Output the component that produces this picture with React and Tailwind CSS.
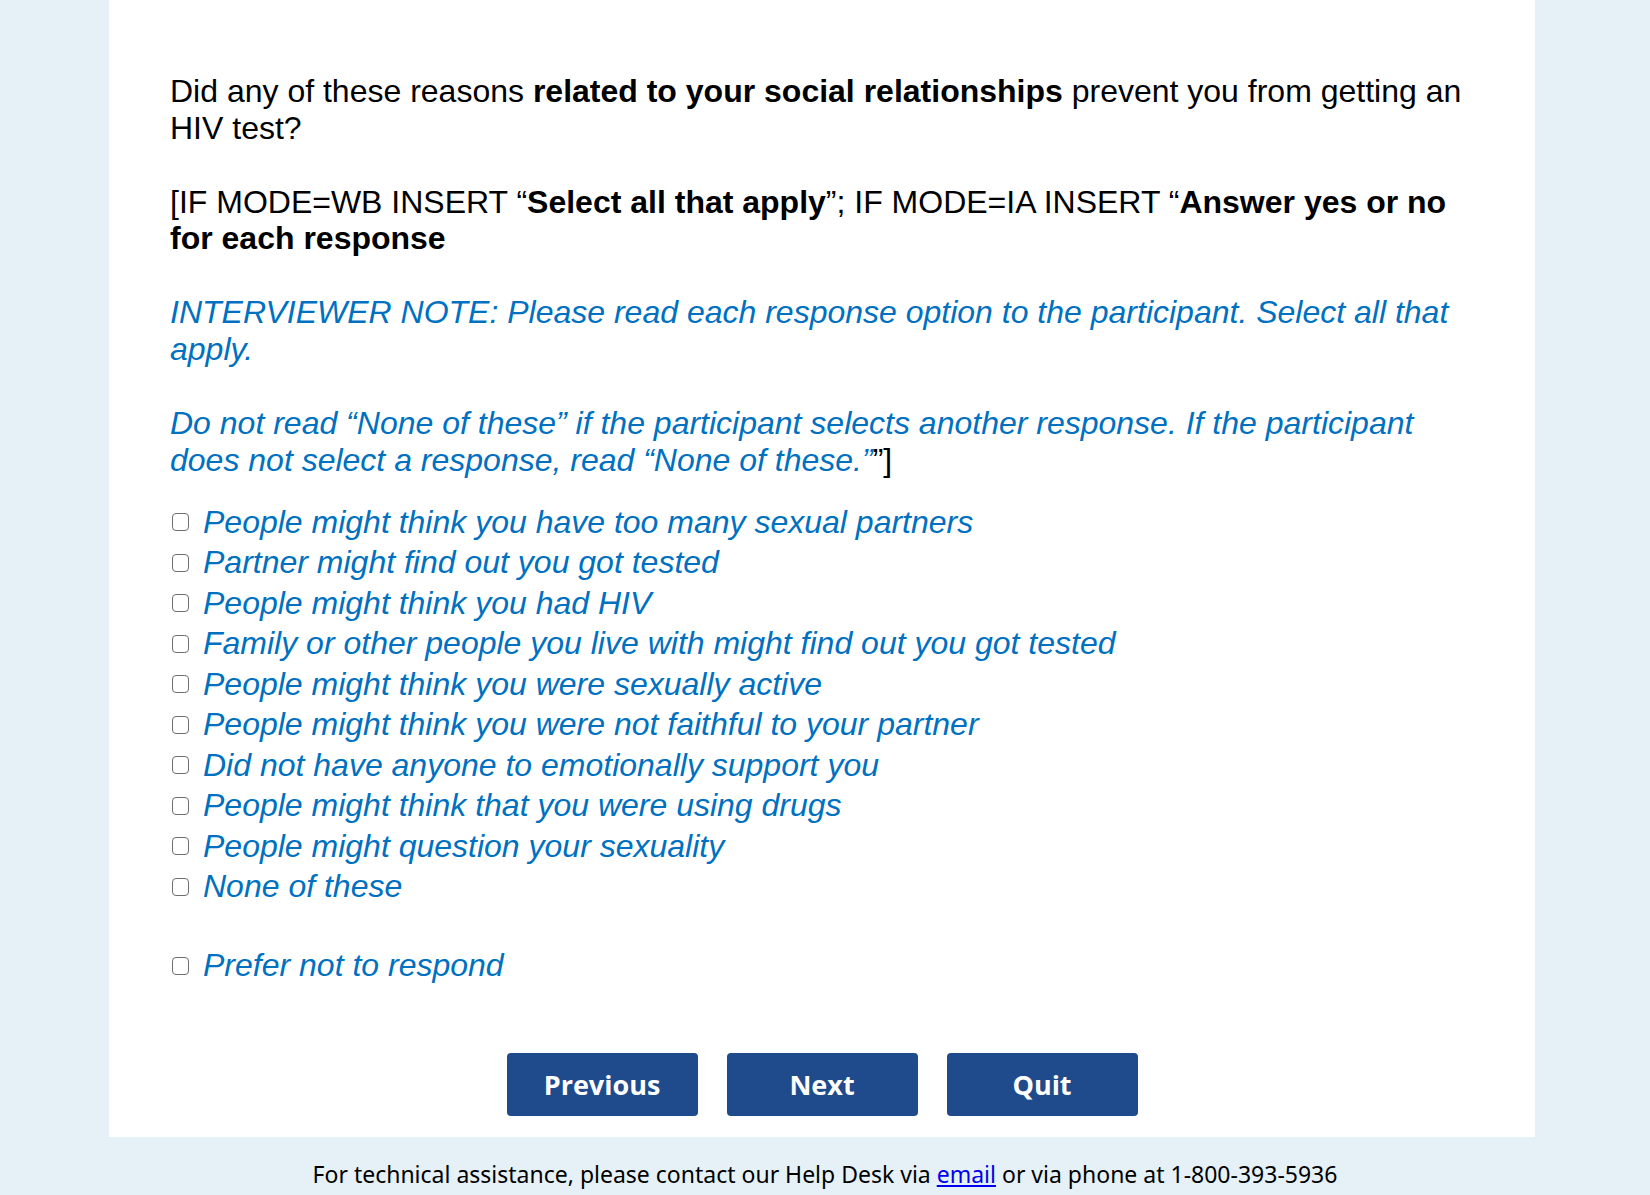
import { useState } from 'react';

const options = [
    'People might think you have too many sexual partners',
    'Partner might find out you got tested',
    'People might think you had HIV',
    'Family or other people you live with might find out you got tested',
    'People might think you were sexually active',
    'People might think you were not faithful to your partner',
    'Did not have anyone to emotionally support you',
    'People might think that you were using drugs',
    'People might question your sexuality',
    'None of these',
];

const Option = ({ label, checked, onToggle }) => (
    <label className="flex items-center h-[40.5px] cursor-pointer">
        <input
            type="checkbox"
            checked={checked}
            onChange={onToggle}
            className="appearance-none w-[17px] h-[18px] ml-[2px] mr-[14px] border-[1.5px] border-[#6f6f6f] rounded-[4px] bg-white checked:bg-[#0070c0] checked:border-[#0070c0] shrink-0"
        />
        <span className="italic text-[#0070c0]">{label}</span>
    </label>
);

const App = () => {
    const [picked, setPicked] = useState({});

    const toggle = (key) => setPicked((p) => ({ ...p, [key]: !p[key] }));

    return (
        <div className="min-h-[1195px] bg-[#e6f1f7]">
            {/* Панель вопроса */}
            <div
                className="ml-[109px] w-[1426px] bg-white pt-[73px] pb-[21px] pl-[61px] pr-[61px] text-[32px] leading-[36.8px] text-black"
                style={{ fontFamily: '"Liberation Sans", Arial, sans-serif' }}
            >
                <p>
                    Did any of these reasons <b>related to your social relationships</b> prevent you from getting an
                    HIV test?
                </p>

                <p className="mt-[37px]">
                    [IF MODE=WB INSERT “<b>Select all that apply</b>”; IF MODE=IA INSERT “<b>Answer yes or no for each response</b>
                </p>

                <p className="mt-[37px] italic text-[#0070c0]">
                    INTERVIEWER NOTE: Please read each response option to the participant. Select all that apply.
                </p>

                <p className="mt-[37.5px] italic text-[#0070c0]">
                    Do not read “None of these” if the participant selects another response. If the participant does not
                    select a response, read “None of these.”<span className="not-italic text-black">”]</span>
                </p>

                <div className="mt-[23px] flex flex-col">
                    {options.map((o) => (
                        <Option key={o} label={o} checked={!!picked[o]} onToggle={() => toggle(o)} />
                    ))}
                    <div className="mt-[38.5px]">
                        <Option
                            label="Prefer not to respond"
                            checked={!!picked.prefer}
                            onToggle={() => toggle('prefer')}
                        />
                    </div>
                </div>

                {/* Кнопки */}
                <div
                    className="mt-[67px] flex justify-center gap-[29px]"
                    style={{ fontFamily: '"Open Sans", sans-serif' }}
                >
                    {['Previous', 'Next', 'Quit'].map((b) => (
                        <button
                            key={b}
                            type="button"
                            className="w-[191px] h-[63px] rounded-[4px] bg-[#1f4a8c] text-white text-[27px] font-bold leading-none"
                        >
                            {b}
                        </button>
                    ))}
                </div>
            </div>

            {/* Футер */}
            <div
                className="pt-[23px] text-center text-[23px] leading-[28px] text-black"
                style={{ fontFamily: '"Noto Sans", sans-serif' }}
            >
                For technical assistance, please contact our Help Desk via{' '}
                <a href="#" className="text-[#0000ee] underline">
                    email
                </a>{' '}
                or via phone at 1-800-393-5936
            </div>
        </div>
    );
};

export default App;
